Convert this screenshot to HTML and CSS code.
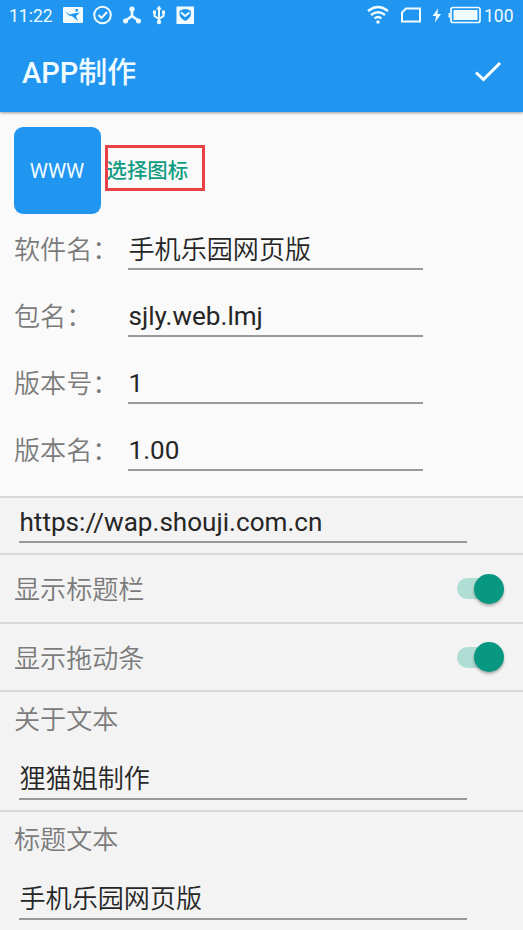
FILE: index.html
```html
<!DOCTYPE html>
<html lang="zh-CN">
<head>
<meta charset="utf-8">
<title>APP制作</title>
<link rel="stylesheet" href="styles.css">
</head>
<body>
<header class="top">
  <div class="status">
    <span class="time">11:22</span>
    <svg class="notices" width="140" height="30" viewBox="0 0 140 30" fill="none" stroke="#f0fbff" stroke-width="2">
      <path fill="#f0fbff" stroke="none" fill-rule="evenodd" d="M3 7h18q1 0 1 1v14q0 1-1 1H3q-1 0-1-1V8q0-1 1-1zM4 11.500l5 3 3.500-1 6.500-1-4 3.500 2 5-5.500-4.500-3.500-1zM14.500 9h2.500v2.500h-2.500z"/>
      <circle cx="41.500" cy="15" r="8.300"/>
      <path d="M37.500 15l3 3 5.500-6"/>
      <path d="M71 9v7l-7 5M71 16l7 5" stroke-width="2.600"/>
      <g fill="#f0fbff" stroke="none"><circle cx="71" cy="9" r="2.600"/><circle cx="64.500" cy="21" r="2.500"/><circle cx="77.500" cy="21" r="2.500"/></g>
      <path d="M98 8v14M93.500 12v4l4.500 3 4.500-3v-4" stroke-width="2"/>
      <path fill="#f0fbff" stroke="none" d="M98 5.500l2.800 4h-5.600zM92 10.500h3v3.500h-3zM101 10.500h3v3.500h-3z"/><circle cx="98" cy="22" r="2.200" fill="#f0fbff" stroke="none"/>
      <path fill="#f0fbff" stroke="none" fill-rule="evenodd" d="M115.500 6.500H133v17.500h-17.500zM118.500 11v4q1 3.500 5.700 6 4.700-2.500 5.700-6v-4q-5.700-4-11.400 0z"/>
      <path d="M120 12.500l4.200 3.500 4.200-3.500" stroke-width="2"/>
    </svg>
    <svg class="signals" width="120" height="30" viewBox="0 0 120 30" fill="none" stroke="#f0fbff" stroke-width="2.300">
      <path d="M2 11q10-8 20 0M5 15q7-5.500 14 0M8.500 18.500q3.500-3 7 0"/>
      <circle cx="12" cy="22" r="1.800" fill="#f0fbff" stroke="none"/>
      <path d="M40 8.500h14V21.500H36v-9z" stroke-width="2"/>
      <path d="M72 8.500l-5.500 7.500h3.500l-1 6.500 6-8.500H71.500z" fill="#f0fbff" stroke="none"/>
      <rect x="85" y="7.500" width="29" height="15" rx="2" stroke-width="1.700"/>
      <path d="M87.500 10h24v10h-24zM82.500 13h2v4.500h-2z" fill="#f0fbff" stroke="none"/>
    </svg>
    <span class="level">100</span>
  </div>
  <div class="bar">
    <h1>APP制作</h1>
    <svg width="30" height="24" viewBox="0 0 30 24" fill="none" stroke="#fff" stroke-width="3"><path d="M3 12.500l7.500 7L27 3"/></svg>
  </div>
</header>
<main>
  <section class="info">
    <div class="picker"><div class="app-icon">WWW</div><div class="choose">选择图标</div></div>
    <div class="field"><label>软件名：</label><div class="input cjk">手机乐园网页版</div></div>
    <div class="field"><label>包名：</label><div class="input">sjly.web.lmj</div></div>
    <div class="field"><label>版本号：</label><div class="input">1</div></div>
    <div class="field"><label>版本名：</label><div class="input">1.00</div></div>
  </section>
  <section class="url"><div class="input wide">https://wap.shouji.com.cn</div></section>
  <section class="toggle"><span>显示标题栏</span><div class="switch"></div></section>
  <section class="toggle"><span>显示拖动条</span><div class="switch"></div></section>
  <section class="text"><label>关于文本</label><div class="input wide">狸猫姐制作</div></section>
  <section class="text"><label>标题文本</label><div class="input wide">手机乐园网页版</div></section>
</main>
</body>
</html>
```
FILE: styles.css
```css
* { box-sizing: border-box; }
body {
  margin: 0;
  height: 930px;
  overflow: hidden;
  background: #f3f3f3;
  color: #262626;
  font: 26.100px/36px Roboto, "Noto Sans CJK SC", sans-serif;
}
.top {
  position: relative;
  height: 112px;
  background: #2196f0;
  color: #f0fbff;
  box-shadow: 0 1px 3px rgba(0, 0, 0, .4);
}
.status { display: flex; height: 30px; font-size: 17.500px; line-height: 32px; }
.time { width: 61px; padding-left: 9px; }
.notices { flex: none; }
.signals { flex: none; margin-left: 165px; }
.level { margin-left: -2px; }
.bar { display: flex; align-items: center; justify-content: space-between; height: 84px; padding: 0 20px 0 22px; }
h1 { margin: 0; padding-top: 2px; font-size: 29px; font-weight: 500; }
.info { height: 386px; padding: 15px 14px 0; background: #fafafa; border-bottom: 2px solid #d9d9d9; }
.picker { display: flex; align-items: center; height: 87px; margin-bottom: 17px; }
.app-icon { width: 87px; height: 87px; margin-left: -.5px; border-radius: 9px; background: #2196f0; color: #f0fbff; font-size: 20.500px; line-height: 89px; text-align: center; }
.choose { width: 100px; height: 46px; margin: -5px 0 0 4.500px; border: 3px solid #e84045; color: #119c82; font-size: 20.400px; font-weight: 500; line-height: 46px; text-indent: -1.500px; }
.field { display: flex; height: 67px; }
label, .toggle { color: #7b7b7b; font-weight: 350; }
.field label { width: 114px; padding-top: 1px; }
.input { width: 295px; height: 39px; padding-left: .5px; border-bottom: 2px solid #999; font-weight: 400; white-space: nowrap; }
.cjk { line-height: 38px; }
.cjk, .text .input { font-weight: 350; }
.wide { width: 448px; margin-left: 19px; }
.url { height: 57px; padding-top: 6px; border-bottom: 2px solid #d9d9d9; }
.toggle { display: flex; align-items: center; justify-content: space-between; height: 68.500px; padding: 1px 19px 0 14px; border-bottom: 2px solid #d9d9d9; }
.toggle span { padding-top: 3px; }
.switch { display: flex; align-items: center; justify-content: flex-end; width: 47px; height: 21px; border-radius: 11px; background: linear-gradient(90deg, #b0ddd4 34px, transparent 34px); }
.switch::after { content: ""; width: 30px; height: 30px; border-radius: 50%; background: #089881; box-shadow: 0 2px 3px rgba(0, 0, 0, .3); }
.text { height: 120px; padding-top: 9px; border-bottom: 2px solid #d9d9d9; }
.text label { display: block; height: 60px; padding: 1px 0 0 14px; }
```
